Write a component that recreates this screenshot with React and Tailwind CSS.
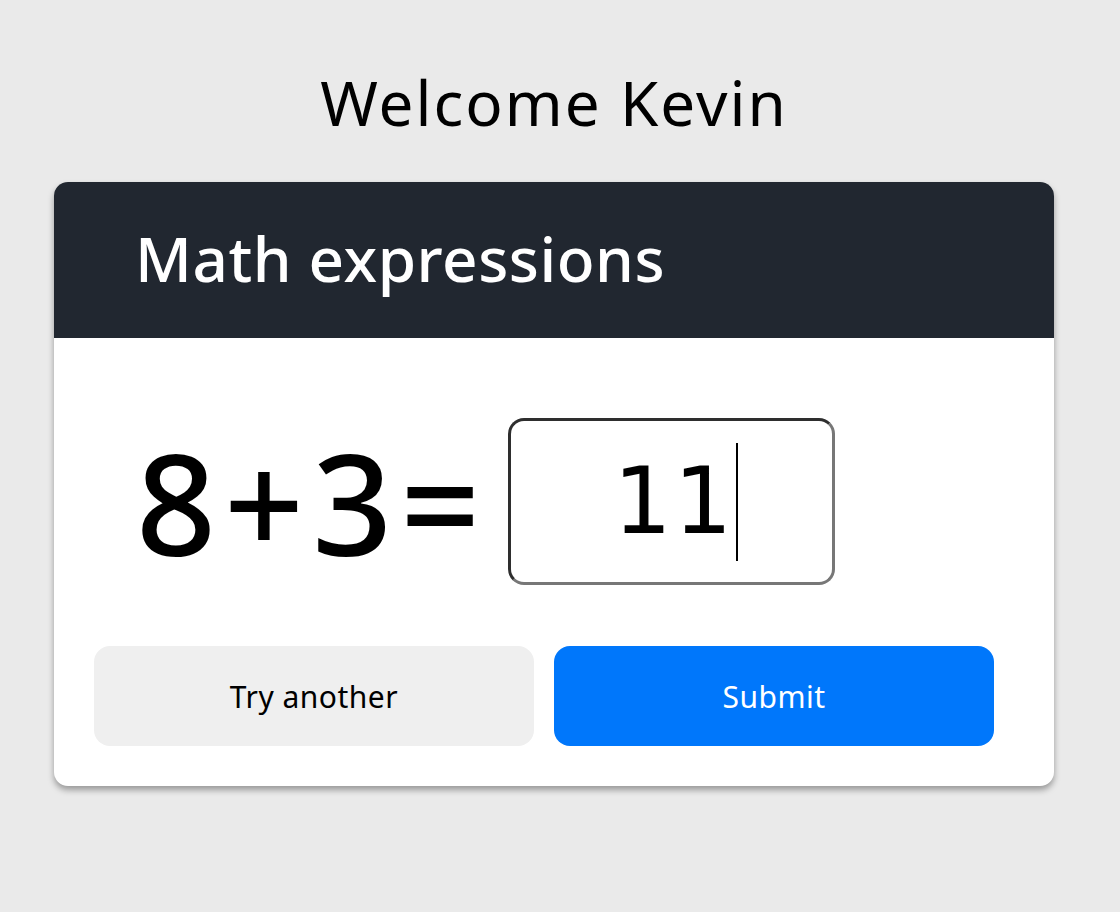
export default function App() {
  const font = { fontFamily: '"Noto Sans", "Open Sans", sans-serif' };

  return (
    <div className="min-h-[912px] w-full bg-[#eaeaea] flex flex-col items-center pr-[12px]" style={font}>
      <h1 className="mt-[62px] text-[62px] leading-[80px] tracking-[2px] text-black font-normal">
        Welcome Kevin
      </h1>

      <div className="mt-[40px] w-[1000px] bg-white rounded-[14px] shadow-[0_4px_6px_rgba(0,0,0,0.35)] overflow-hidden">
        <div className="h-[156px] bg-[#212730] flex items-center pl-[81px] pb-[4px]">
          <h2 className="text-[62px] leading-none tracking-[0.5px] font-medium text-white">Math expressions</h2>
        </div>

        <div className="pl-[40px] pr-[60px] pt-[80px] pb-[40px]">
          <div className="flex items-center pl-[42px]">
            <span className="text-[140px] leading-none tracking-[8px] font-medium text-black">8+3=</span>
            <div className="ml-[20px] w-[327px] h-[167px] rounded-[16px] border-[3px] border-t-[#2e2e2e] border-l-[#2e2e2e] border-b-[#777] border-r-[#777] flex items-center justify-center">
              <span
                className="text-[92px] leading-none text-black tracking-[2px] pl-[8px]"
                style={{ fontFamily: '"DejaVu Sans", sans-serif' }}
              >
                11
              </span>
              <span className="w-[2px] h-[118px] bg-black ml-[2px]" />
            </div>
          </div>

          <div className="mt-[61px] flex gap-[20px]">
            <button className="w-[440px] h-[100px] rounded-[16px] bg-[#efefef] text-[30px] tracking-[0.5px] text-black">
              Try another
            </button>
            <button className="w-[440px] h-[100px] rounded-[16px] bg-[#0077fb] text-[30px] tracking-[0.5px] text-white">
              Submit
            </button>
          </div>
        </div>
      </div>
    </div>
  );
}
